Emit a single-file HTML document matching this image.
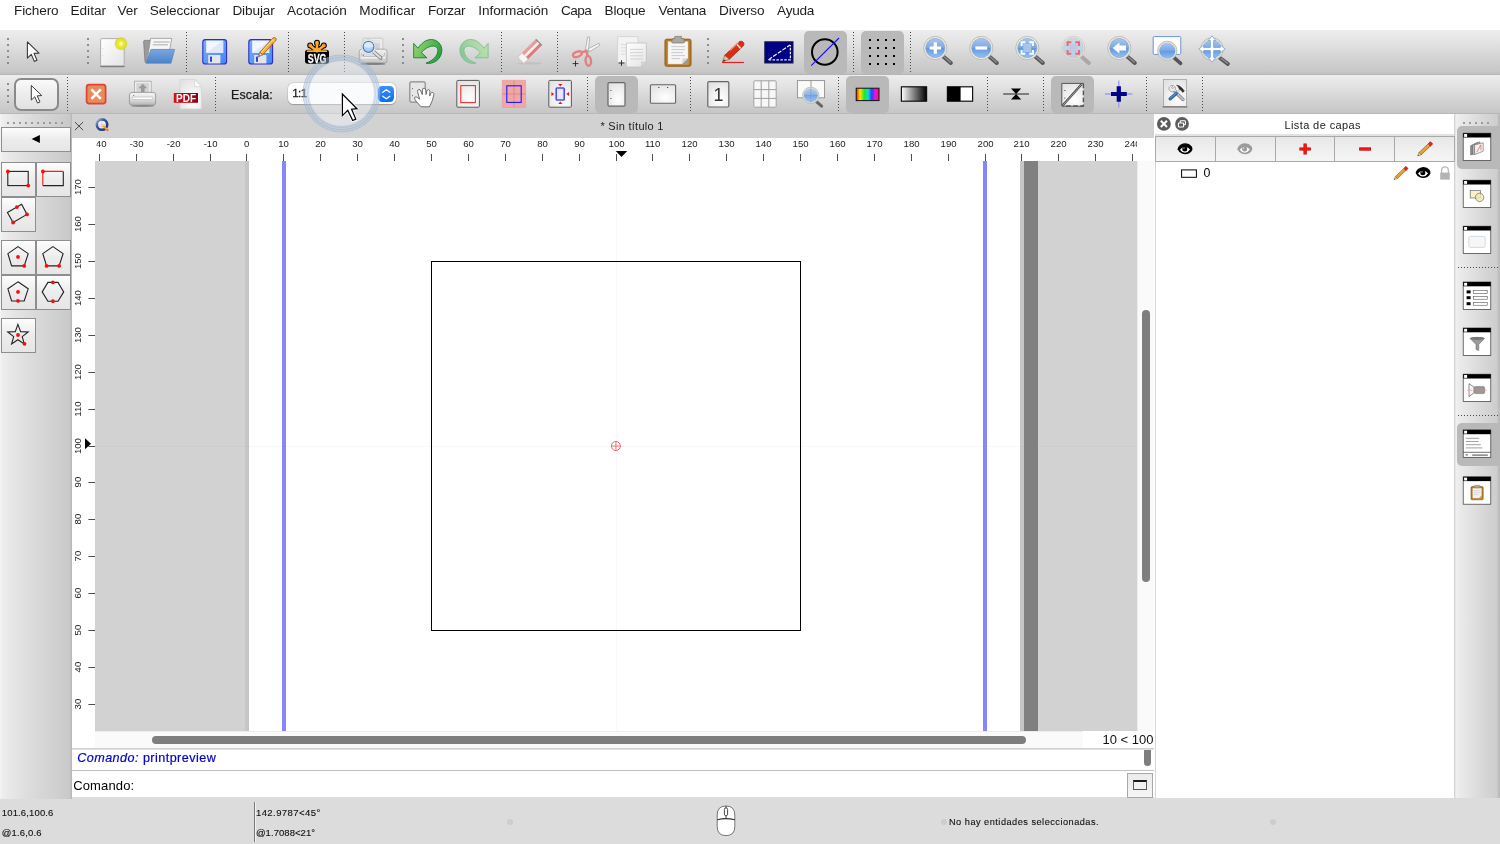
<!DOCTYPE html>
<html lang="es">
<head>
<meta charset="utf-8">
<title>LibreCAD - Sin título 1</title>
<style>
*{box-sizing:border-box}
html,body{margin:0;padding:0}
body{width:1500px;height:844px;position:relative;overflow:hidden;background:#fff;font-family:"Liberation Sans",sans-serif;color:#000;font-size:13px}
.abs{position:absolute}
#menubar{position:absolute;left:0;top:0;width:1500px;height:30px;background:#fff}
#menubar span{position:absolute;top:2px;font-size:14px;line-height:17px;color:#1c1c1c;white-space:nowrap;transform-origin:0 50%}
#tb1{position:absolute;left:0;top:30.4px;width:1500px;height:44px;background:linear-gradient(#ededed,#e2e2e2 30%,#d2d2d2 66%,#c8c8c8 93%,#c0c0c0)}
#tb2{position:absolute;left:0;top:75px;width:1500px;height:38.6px;background:linear-gradient(#ededed,#e2e2e2 30%,#d2d2d2 66%,#c8c8c8 93%,#c2c2c2)}
.vsep{position:absolute;width:1px;background:repeating-linear-gradient(#4a4a4a 0 1px,transparent 1px 3px)}
.grip{position:absolute;width:2px;background:repeating-linear-gradient(#8c8c8c 0 2px,transparent 2px 6px)}
.chk{position:absolute;background:#b9b9b9;border-radius:5px}
svg{position:absolute;overflow:visible;will-change:transform}
#leftdock{position:absolute;left:0;top:114px;width:72px;height:684.6px;z-index:2;background:linear-gradient(90deg,#f6f6f6 0,#eeeeee 2.5%,#e4e4e4 22%,#d9d9d9 50%,#cfcfcf 80%,#c9c9c9 97%,#bdbdbd 98.5%,#b6b6b6)}
.tbtn{position:absolute;width:35px;height:35px;border:1px solid #8e8e8e;background:linear-gradient(#fdfdfd,#ececec 50%,#e6e6e6)}
#mdibar{position:absolute;left:72px;top:114px;width:1081.7px;height:23.8px;background:#d2d2d2}
#status{position:absolute;left:0;top:797px;width:1500px;height:47px;background:#dcdcdc}
#status span{position:absolute;font-size:10px;white-space:nowrap;color:#111}
#rightbar{position:absolute;left:1454px;top:114px;width:46px;height:684.2px;z-index:1;background:linear-gradient(90deg,#d4d4d4 0,#d4d4d4 1px,#f1f1f1 1.8px,#ececec 10%,#e2e2e2 36%,#d7d7d7 64%,#cdcdcd 94%,#bdbdbd 96.5%,#bbbbbb)}
#layers{position:absolute;left:1153.7px;top:114px;width:300.3px;height:684.2px;background:#fff;z-index:1}
.lbtn{position:absolute;top:136px;height:26px;border:1.2px solid #a9a9a9;background:linear-gradient(#e7e7e7,#eeeeee 45%,#f5f5f5)}
</style>
</head>
<body>
<div id="menubar"><svg style="left:0;top:0" width="1500" height="30" viewBox="0 0 1500 30" font-family="Liberation Sans, sans-serif"><text x="14.0" y="15.4" font-size="13.6" fill="#1e1e1e" textLength="44.6" lengthAdjust="spacing" >Fichero</text>
<text x="70.5" y="15.4" font-size="13.6" fill="#1e1e1e" textLength="35.5" lengthAdjust="spacing" >Editar</text>
<text x="117.6" y="15.4" font-size="13.6" fill="#1e1e1e" textLength="20.3" lengthAdjust="spacing" >Ver</text>
<text x="149.8" y="15.4" font-size="13.6" fill="#1e1e1e" textLength="69.9" lengthAdjust="spacing" >Seleccionar</text>
<text x="232.4" y="15.4" font-size="13.6" fill="#1e1e1e" textLength="42.4" lengthAdjust="spacing" >Dibujar</text>
<text x="287.0" y="15.4" font-size="13.6" fill="#1e1e1e" textLength="59.8" lengthAdjust="spacing" >Acotación</text>
<text x="359.2" y="15.4" font-size="13.6" fill="#1e1e1e" textLength="56.2" lengthAdjust="spacing" >Modificar</text>
<text x="427.9" y="15.4" font-size="13.6" fill="#1e1e1e" textLength="37.7" lengthAdjust="spacing" >Forzar</text>
<text x="478.3" y="15.4" font-size="13.6" fill="#1e1e1e" textLength="70.1" lengthAdjust="spacing" >Información</text>
<text x="560.9" y="15.4" font-size="13.6" fill="#1e1e1e" textLength="31.0" lengthAdjust="spacing" >Capa</text>
<text x="604.6" y="15.4" font-size="13.6" fill="#1e1e1e" textLength="41.0" lengthAdjust="spacing" >Bloque</text>
<text x="658.4" y="15.4" font-size="13.6" fill="#1e1e1e" textLength="48.0" lengthAdjust="spacing" >Ventana</text>
<text x="719.1" y="15.4" font-size="13.6" fill="#1e1e1e" textLength="45.5" lengthAdjust="spacing" >Diverso</text>
<text x="777.1" y="15.4" font-size="13.6" fill="#1e1e1e" textLength="37.3" lengthAdjust="spacing" >Ayuda</text></svg></div>
<div id="tb1"></div>
<div class="abs" style="left:0;top:73.8px;width:1500px;height:1.3px;background:linear-gradient(#bdbdbd,#b0b0b0)"></div>
<div id="tb2"></div>
<div class="abs" style="left:0;top:112.6px;width:1500px;height:1.3px;background:linear-gradient(#bdbdbd,#b4b4b4)"></div>
<!-- checked backgrounds -->
<div class="chk" style="left:804px;top:31px;width:43px;height:43px"></div>
<div class="chk" style="left:861px;top:31px;width:43px;height:43px"></div>
<div class="chk" style="left:595px;top:76px;width:43px;height:37px"></div>
<div class="chk" style="left:846px;top:76px;width:43px;height:37px"></div>
<div class="chk" style="left:1051px;top:76px;width:43px;height:37px"></div>
<!-- grips & separators toolbar 1 -->
<div class="grip" style="left:7px;top:38px;height:26px"></div>
<div class="grip" style="left:87px;top:38px;height:26px"></div>
<div class="grip" style="left:402px;top:38px;height:26px"></div>
<div class="grip" style="left:707px;top:38px;height:26px"></div>
<div class="vsep" style="left:186px;top:32px;height:41px"></div>
<div class="vsep" style="left:288px;top:32px;height:41px"></div>
<div class="vsep" style="left:344px;top:32px;height:41px"></div>
<div class="vsep" style="left:501px;top:32px;height:41px"></div>
<div class="vsep" style="left:557px;top:32px;height:41px"></div>
<div class="vsep" style="left:853px;top:32px;height:41px"></div>
<div class="vsep" style="left:910px;top:32px;height:41px"></div>
<!-- grips & separators toolbar 2 -->
<div class="grip" style="left:7px;top:83px;height:20px"></div>
<div class="vsep" style="left:67px;top:77px;height:35px"></div>
<div class="vsep" style="left:215px;top:77px;height:35px"></div>
<div class="vsep" style="left:587px;top:77px;height:35px"></div>
<div class="vsep" style="left:690px;top:77px;height:35px"></div>
<div class="vsep" style="left:838px;top:77px;height:35px"></div>
<div class="vsep" style="left:987px;top:77px;height:35px"></div>
<div class="vsep" style="left:1043px;top:77px;height:35px"></div>
<div class="vsep" style="left:1146px;top:77px;height:35px"></div>
<div class="vsep" style="left:1202px;top:77px;height:35px"></div>
<!-- selected pointer button -->
<div class="abs" style="left:14px;top:78px;width:45px;height:33px;border:2px solid #8a8a8a;border-radius:7px;background:linear-gradient(#fafafa,#ededed 45%,#e2e2e2)"></div>
<!-- scale combo -->
<div class="abs" style="left:287.8px;top:83.2px;width:107.8px;height:21px;background:#fff;border-radius:5.5px;box-shadow:0 0 0 0.5px rgba(0,0,0,.10),0 .5px 1.2px rgba(0,0,0,.22)"></div>
<div class="abs" style="left:378.2px;top:85.8px;width:16.2px;height:16.6px;border-radius:4.2px;background:linear-gradient(#3d8efc,#0b6cf6)"></div>
<svg style="left:378px;top:85px" width="17" height="18" viewBox="378 85 17 18"><path d="M382.8 92.3 L386.3 89.7 L389.8 92.3 M382.8 96.2 L386.3 98.8 L389.8 96.2" fill="none" stroke="#fff" stroke-width="1.3" stroke-linecap="round" stroke-linejoin="round"/></svg>
<svg style="left:0;top:0" width="1500" height="120" viewBox="0 0 1500 120" font-family="Liberation Sans, sans-serif"><text x="231.0" y="99.3" font-size="12.4" fill="#1a1a1a" textLength="41.8" lengthAdjust="spacing" stroke="#1a1a1a" stroke-width=".25">Escala:</text>
<text x="292.2" y="96.9" font-size="11.6" fill="#1c1c1c" textLength="15.0" lengthAdjust="spacing" stroke="#1c1c1c" stroke-width=".3">1:1</text></svg>
<svg style="left:0;top:0" width="1500" height="120" viewBox="0 0 1500 120">
<defs>
<linearGradient id="gPage" x1="0" y1="0" x2="1" y2="1"><stop offset="0" stop-color="#fff"/><stop offset="1" stop-color="#e4e4e4"/></linearGradient>
<linearGradient id="gLens" x1="0" y1="0" x2="0" y2="1"><stop offset="0" stop-color="#aac8f0"/><stop offset=".5" stop-color="#78a6e4"/><stop offset=".52" stop-color="#6499e0"/><stop offset="1" stop-color="#94c0f4"/></linearGradient>
<linearGradient id="gLensD" x1="0" y1="0" x2="0" y2="1"><stop offset="0" stop-color="#c3d3ea"/><stop offset="1" stop-color="#b4cdea"/></linearGradient>
<radialGradient id="gGlow"><stop offset="0" stop-color="#fffde0"/><stop offset=".35" stop-color="#f1ee30"/><stop offset=".8" stop-color="#d8d820" stop-opacity=".85"/><stop offset="1" stop-color="#d0d020" stop-opacity="0"/></radialGradient>
<linearGradient id="gFold" x1="0" y1="0" x2="0" y2="1"><stop offset="0" stop-color="#7aa7de"/><stop offset="1" stop-color="#4a83c9"/></linearGradient>
<linearGradient id="gFlop" x1="0" y1="0" x2="1" y2="1"><stop offset="0" stop-color="#7ab0ff"/><stop offset="1" stop-color="#3f86f5"/></linearGradient>
<linearGradient id="gUndo" x1="0" y1="0.2" x2="1" y2=".6"><stop offset="0" stop-color="#9ad66e"/><stop offset=".5" stop-color="#5fbb5c"/><stop offset="1" stop-color="#2a9c3e"/></linearGradient>
<linearGradient id="gRedo" x1="0" y1="0.2" x2="1" y2=".6"><stop offset="0" stop-color="#bfe0ae"/><stop offset=".5" stop-color="#a8d8a8"/><stop offset="1" stop-color="#86c596"/></linearGradient>
<linearGradient id="gGrey" x1="0" y1="0" x2="0" y2="1"><stop offset="0" stop-color="#f4f4f4"/><stop offset="1" stop-color="#c4c4c4"/></linearGradient>
<g id="mag">
  <line x1="8" y1="8.5" x2="15.5" y2="15" stroke="#555" stroke-width="4" stroke-linecap="round"/>
  <line x1="9" y1="9" x2="15" y2="14.2" stroke="#8a8a8a" stroke-width="1.6" stroke-linecap="round"/>
  <circle r="11.6" fill="#ebebe3" stroke="#b9b9ae" stroke-width="0.9"/>
  <circle r="9.6" fill="url(#gLens)" stroke="#7d9cca" stroke-width=".6"/>
</g>
<g id="magD" opacity=".75">
  <line x1="8" y1="8.5" x2="15.5" y2="15" stroke="#9a9a9a" stroke-width="4" stroke-linecap="round"/>
  <circle r="11.6" fill="#e6e6e0" stroke="#c4c4bc" stroke-width="0.9"/>
  <circle r="9.8" fill="url(#gLensD)" stroke="#a8b8d0" stroke-width=".6"/>
</g>
<path id="cur" d="M0 0 L0 16.3 L3.9 12.6 L6.9 19.6 L9.6 18.4 L6.6 11.6 L11.6 11.3 Z" fill="#fff" stroke="#3a3a3a" stroke-width="1.1" stroke-linejoin="round"/>
</defs>
<!-- TB1 -->
<use href="#cur" x="27.4" y="41.8"/>
<!-- new -->
<rect x="100.6" y="38.6" width="23.6" height="27.2" rx="1.2" fill="url(#gPage)" stroke="#a8a8a8" stroke-width=".9"/>
<path d="M100.4 66 Q100.6 66.6 101.6 66.6 L123.2 66.6 Q124.2 66.6 124.4 66" fill="none" stroke="#808080" stroke-width="1.3"/>
<rect x="102.2" y="48" width="1" height=".8" fill="#d0d0d0"/><rect x="102.2" y="55.4" width="1" height=".8" fill="#d0d0d0"/>
<circle cx="121" cy="43.7" r="6.9" fill="url(#gGlow)"/>
<!-- open -->
<path d="M143.6 41.6 Q143.6 40.4 144.8 40.4 L150.6 40.4 L148 62.8 L146.2 62.8 Q145.2 62.8 145 61.6 Z" fill="#9a9a9a" stroke="#747474" stroke-width=".7"/>
<path d="M150.6 38.4 L171.8 38.4 L169.6 50 L152 50 L147.2 61.4 Z" fill="#f6f6f6" stroke="#8e8e8e" stroke-width=".7" stroke-linejoin="round"/>
<path d="M153.4 42 L169.6 42 M152.8 44.8 L168 44.8" stroke="#c4c4c4" stroke-width="1.5"/>
<path d="M150.9 49.4 L174.6 49.4 L171 63.2 L146.2 63.2 Z" fill="url(#gFold)" stroke="#4f84c8" stroke-width=".7" stroke-linejoin="round"/>
<!-- save -->
<g id="flop">
<rect x="202.8" y="39.6" width="23.8" height="24.4" rx="2.6" fill="url(#gFlop)" stroke="#2b2fc4" stroke-width="1.1"/>
<rect x="206.2" y="40.6" width="17" height="12.4" fill="#f4f7ff"/>
<path d="M206.2 53 L223.2 40.6 L223.2 53 Z" fill="#dfe8fb"/>
<rect x="208.2" y="55" width="12.2" height="8.4" fill="#e4e4ea"/>
<rect x="210" y="56.6" width="2" height="5.2" fill="#2a48d8"/>
</g>
<use href="#flop" x="46"/>
<path d="M272.7 38.2 Q274.6 36.8 275.9 38.4 Q277 39.6 275.5 40.8 L262.6 54.9 L259.8 52.3 Z" fill="#fbb416" stroke="#b4401a" stroke-width=".8" stroke-linejoin="round"/>
<path d="M273 39.6 L260.8 52.8" stroke="#ffe48a" stroke-width="1"/>
<path d="M259.8 52.3 L262.6 54.9 L258.4 56.7 Z" fill="#f4dcb4" stroke="#8a3a1a" stroke-width=".6" stroke-linejoin="round"/>
<path d="M259.2 55.2 L260 56 L258.4 56.7 Z" fill="#333"/>
<path d="M271.6 39.4 L274.4 42" stroke="#e0e0d8" stroke-width="1"/>
<!-- svg -->
<g stroke="#000" stroke-width="4.6" stroke-linecap="round" stroke-linejoin="round" fill="#000">
<path d="M317 42.9 L317 50 M310.4 45.6 L316 50.6 M323.6 45.6 L318 50.6"/>
<circle cx="317" cy="42.7" r=".7"/><circle cx="310.2" cy="45.4" r=".7"/><circle cx="323.8" cy="45.4" r=".7"/>
</g>
<rect x="305" y="49.8" width="24" height="14" rx="2.8" fill="#000"/>
<g stroke="#fba92c" stroke-width="2.7" stroke-linecap="round" fill="#fba92c">
<path d="M317 43 L317 50.4 M310.5 45.7 L316.4 51 M323.5 45.7 L317.6 51"/>
<circle cx="317" cy="42.7" r=".55"/><circle cx="310.2" cy="45.4" r=".55"/><circle cx="323.8" cy="45.4" r=".55"/>
<path d="M307.6 51.2 H326.4" stroke-width="1.8"/>
</g>
<text x="317.1" y="63" font-size="13.2" font-weight="bold" fill="#fff" stroke="#fff" stroke-width=".3" text-anchor="middle" textLength="18.8" lengthAdjust="spacingAndGlyphs" font-family="Liberation Sans, sans-serif">SVG</text>
<!-- print preview -->
<rect x="363.2" y="38.2" width="19.6" height="13.4" rx="1" fill="#ececec" stroke="#bcbcbc" stroke-width=".7"/>
<rect x="366" y="40.2" width="14" height="10" fill="#d2d2d2"/>
<rect x="366" y="40.2" width="14" height="3" fill="#e6e6e6"/>
<path d="M361.6 49.2 L384.6 49.2 Q387 49.4 387 52.4 L387 60.6 Q387 63 384.4 63 L361.8 63 Q359.2 63 359.2 60.6 L359.2 52.4 Q359.4 49.4 361.6 49.2 Z" fill="url(#gGrey)" stroke="#9c9c9c" stroke-width=".8"/>
<path d="M361.4 52.6 Q361.4 56.4 363.4 56.6 L382.8 56.6 Q384.8 56.4 384.8 52.6" fill="none" stroke="#b2b2b2" stroke-width=".7"/>
<path d="M361 57.8 H385.2" stroke="#fafafa" stroke-width="1.2"/>
<rect x="363" y="54.6" width="1" height="1" fill="#666"/>
<ellipse cx="373" cy="63.9" rx="12.6" ry="1.2" fill="#6e6e6e" opacity=".75"/>
<path d="M373.4 51.6 L380.6 57.9" stroke="#858585" stroke-width="3.8" stroke-linecap="round"/>
<path d="M373.6 51.7 L380.5 57.7" stroke="#e2e2e2" stroke-width="2" stroke-linecap="round"/>
<circle cx="368.5" cy="46.9" r="7.3" fill="#f3f3f1" stroke="#c4c4c0" stroke-width=".6"/>
<circle cx="368.5" cy="46.9" r="5.4" fill="#b4cdec" stroke="#4a80d0" stroke-width="1.3"/>
<path d="M363.8 46.6 A4.7 4.7 0 0 1 373.2 46.6 Q368.5 49 363.8 46.6 Z" fill="#dce9f8"/>
<!-- undo -->
<path d="M413.7 43.4 L413.7 57.8 L426.9 57.8 L421.5 52.7 C424 49.5 428 46.3 433.2 46.1 C437 46.3 438.2 49 437.7 51.5 C437.2 56 433.5 60.3 426 63.2 C434 64.6 441.5 59 441.9 50.5 C441.9 44 437 39.6 431.4 39.5 C425 39.6 421 44 417.9 48.2 Z" fill="url(#gUndo)" stroke="#1a7f2c" stroke-width=".9" stroke-linejoin="round"/>
<!-- redo -->
<g transform="translate(901.8 0) scale(-1 1)"><path d="M413.7 43.4 L413.7 57.8 L426.9 57.8 L421.5 52.7 C424 49.5 428 46.3 433.2 46.1 C437 46.3 438.2 49 437.7 51.5 C437.2 56 433.5 60.3 426 63.2 C434 64.6 441.5 59 441.9 50.5 C441.9 44 437 39.6 431.4 39.5 C425 39.6 421 44 417.9 48.2 Z" fill="url(#gRedo)" stroke="#7cbd8e" stroke-width=".9" stroke-linejoin="round"/></g>
<!-- eraser -->
<ellipse cx="530" cy="63.3" rx="12.4" ry="1.3" fill="#bdb4b4" opacity=".55"/>
<g transform="rotate(-45 530.05 51.15)">
<rect x="517.05" y="46.9" width="26" height="8.5" rx=".8" fill="#df7a7a"/>
<rect x="517.05" y="46.9" width="26" height="2.8" fill="#e89c9c"/>
<rect x="521" y="49.7" width="22" height="2.7" fill="#f3f0f0"/>
<rect x="541.8" y="46.9" width="1.25" height="8.5" fill="#8e8e8e"/>
<rect x="517.05" y="46.9" width="6" height="8.5" rx=".6" fill="#f6f6f6" stroke="#c4c4c4" stroke-width=".5"/>
</g>
<!-- scissors -->
<path d="M587.6 37 L589.8 37.2 L588.2 52.4 L585.2 51.6 Z" fill="#f4f4f4" stroke="#a0a0a0" stroke-width=".7" stroke-linejoin="round"/>
<path d="M599 43.2 L599.8 45.4 L589.4 51.8 L588.2 48.8 Z" fill="#f4f4f4" stroke="#a0a0a0" stroke-width=".7" stroke-linejoin="round"/>
<ellipse cx="577.4" cy="54.3" rx="4.5" ry="2.5" transform="rotate(-20 577.4 54.3)" fill="none" stroke="#e08282" stroke-width="2.4"/>
<ellipse cx="588.3" cy="60.9" rx="2.7" ry="4.9" transform="rotate(-6 588.3 60.9)" fill="none" stroke="#e08282" stroke-width="2.4"/>
<path d="M581.6 52.6 L586.6 50.6 L587.4 56.2" fill="none" stroke="#e08282" stroke-width="2.4" stroke-linejoin="round"/>
<path d="M572.6 63.6 L578.4 63.6 M575.5 60.7 L575.5 66.5" stroke="#222" stroke-width=".9"/>
<!-- copy -->
<rect x="617.6" y="36.6" width="20.4" height="26" rx="1" fill="#f3f3f3" stroke="#cfcfcf" stroke-width=".8"/>
<path d="M621 44.6 H635 M621 47.8 H635 M621 51 H635 M621 54.2 H630" stroke="#dcdcdc" stroke-width="1"/>
<path d="M626.4 43 L646.4 43 L646.4 62 L641.6 67 L626.4 67 Z" fill="url(#gPage)" stroke="#c2c2c2" stroke-width=".8"/>
<path d="M646.4 62 L641.6 62 L641.6 67 Z" fill="#d8d8d8" stroke="#bdbdbd" stroke-width=".5"/>
<path d="M630 49.4 H643 M630 52.6 H643 M630 55.8 H643 M630 59 H643" stroke="#d2d2d2" stroke-width="1"/>
<path d="M618.6 63 L624.4 63 M621.5 60.2 L621.5 65.8" stroke="#222" stroke-width=".9"/>
<!-- paste -->
<rect x="665" y="39.2" width="26" height="27" rx="1.6" fill="#b87a22" stroke="#8f5a12" stroke-width="1"/>
<rect x="668" y="41.6" width="20" height="22.4" fill="#f6f6f6" stroke="#d0d0d0" stroke-width=".5"/>
<path d="M671.4 46.6 H685 M671.4 49.6 H685 M671.4 52.6 H683 M671.4 55.6 H685 M671.4 58.6 H680" stroke="#c9c9c9" stroke-width="1"/>
<path d="M688 58 L688 64 L682 64 Z" fill="#9a9a9a"/>
<path d="M682 64 L688 58 L682.6 58.6 Z" fill="#d6d6d6"/>
<path d="M671.6 41.8 L672.6 38.6 L674.6 38.6 L674.8 36.4 L681.4 36.4 L681.6 38.6 L683.6 38.6 L684.6 41.8 Q684.6 43 683 43 L673 43 Q671.6 43 671.6 41.8 Z" fill="#a9a99f" stroke="#77776e" stroke-width=".7"/>
<!-- pencil -->
<path d="M739.6 41.4 Q742 40.6 743.6 42.6 Q744.6 44.4 743.2 46 L729.4 59.2 L724.6 55.4 Z" fill="#e02a12" stroke="#8a3a10" stroke-width=".8"/>
<path d="M736.6 44 L740.6 48.4" stroke="#ddd" stroke-width="1.6"/>
<path d="M738.6 42.4 L730 50.6" stroke="#ff8a70" stroke-width="1.2"/>
<path d="M724.6 55.4 L729.4 59.2 L722.6 61.8 Z" fill="#e8c39a" stroke="#8a5a2a" stroke-width=".6"/>
<path d="M724 59.4 L725.6 60.6 L722.6 61.8 Z" fill="#222"/>
<line x1="722" y1="62.4" x2="744" y2="62.4" stroke="#f00" stroke-width="1"/>
<!-- draft -->
<rect x="764.8" y="41.8" width="28.2" height="21.2" fill="#000084" stroke="#1a1a3c" stroke-width="1"/>
<path d="M768.6 59.6 L790 45" stroke="#fff" stroke-width="1.1" stroke-dasharray="4.2 1.4"/>
<path d="M768.6 59.8 L790.4 59.8 L790.4 45" fill="none" stroke="#e8e8ff" stroke-width="1.3" stroke-dasharray="2.6 1.3"/>
<!-- circle/line -->
<circle cx="824.8" cy="52" r="12.8" fill="none" stroke="#000" stroke-width="2"/>
<line x1="811.2" y1="65.6" x2="839" y2="38" stroke="#1010ff" stroke-width="1.1"/>
<!-- grid dots -->
<g fill="#000">
<rect x="869" y="39" width="2" height="2"/><rect x="877" y="39" width="2" height="2"/><rect x="885" y="39" width="2" height="2"/><rect x="893" y="39" width="2" height="2"/>
<rect x="869" y="47" width="2" height="2"/><rect x="877" y="47" width="2" height="2"/><rect x="885" y="47" width="2" height="2"/><rect x="893" y="47" width="2" height="2"/>
<rect x="869" y="55" width="2" height="2"/><rect x="877" y="55" width="2" height="2"/><rect x="885" y="55" width="2" height="2"/><rect x="893" y="55" width="2" height="2"/>
<rect x="869" y="63" width="2" height="2"/><rect x="877" y="63" width="2" height="2"/><rect x="885" y="63" width="2" height="2"/><rect x="893" y="63" width="2" height="2"/>
</g>
<!-- zooms -->
<use href="#mag" x="935.3" y="48"/>
<path d="M929.6 48 H941 M935.3 42.3 V53.7" stroke="#fff" stroke-width="3.2"/>
<use href="#mag" x="981.3" y="48"/>
<path d="M975.4 48 H987.2" stroke="#fff" stroke-width="3.2"/>
<use href="#mag" x="1027.3" y="48"/>
<rect x="1023.3" y="44" width="8" height="8" fill="#a9c4ea"/>
<path d="M1021.6 46 V42.3 H1025.3 M1029.3 42.3 H1033 V46 M1033 50 V53.7 H1029.3 M1025.3 53.7 H1021.6 V50" fill="none" stroke="#fff" stroke-width="1.9"/>
<use href="#magD" x="1073.3" y="48"/>
<rect x="1069.3" y="44" width="8" height="8" fill="#bccbe2"/>
<path d="M1067.6 46 V42.3 H1071.3 M1075.3 42.3 H1079 V46 M1079 50 V53.7 H1075.3 M1071.3 53.7 H1067.6 V50" fill="none" stroke="#ee6868" stroke-width="2"/>
<use href="#mag" x="1119.3" y="48"/>
<path d="M1112.6 48 L1119.4 42.6 L1119.4 45.6 L1126 45.6 L1126 50.4 L1119.4 50.4 L1119.4 53.4 Z" fill="#fff"/>
<!-- zoom window -->
<rect x="1153.2" y="36.6" width="27.6" height="17.8" rx="1" fill="#fdfdff" stroke="#6c93d4" stroke-width="1"/>
<line x1="1174" y1="57.6" x2="1180.6" y2="63.4" stroke="#555" stroke-width="3.6" stroke-linecap="round"/>
<circle cx="1167.3" cy="50.8" r="9.6" fill="#e4e4da" stroke="#b9b9ae" stroke-width=".9"/>
<circle cx="1167.3" cy="50.8" r="8" fill="url(#gLens)"/>
<!-- zoom pan -->
<line x1="1220" y1="58" x2="1227.8" y2="63.8" stroke="#555" stroke-width="4" stroke-linecap="round"/>
<line x1="1221" y1="58.4" x2="1227.4" y2="63.2" stroke="#8a8a8a" stroke-width="1.5" stroke-linecap="round"/>
<circle cx="1212" cy="49" r="11.3" fill="#e2e2d8" stroke="#b4b4a8" stroke-width=".9"/>
<circle cx="1212" cy="49" r="9.6" fill="url(#gLens)"/>
<path d="M1212 35.8 L1215.7 40.6 L1213.6 40.6 L1213.6 47.4 L1220.4 47.4 L1220.4 45.3 L1225.2 49 L1220.4 52.7 L1220.4 50.6 L1213.6 50.6 L1213.6 57.4 L1215.7 57.4 L1212 62.2 L1208.3 57.4 L1210.4 57.4 L1210.4 50.6 L1203.6 50.6 L1203.6 52.7 L1198.8 49 L1203.6 45.3 L1203.6 47.4 L1210.4 47.4 L1210.4 40.6 L1208.3 40.6 Z" fill="#fff" stroke="#5c8cd8" stroke-width=".6" stroke-linejoin="round"/>
</svg>
<svg style="left:0;top:0" width="1500" height="120" viewBox="0 0 1500 120">
<defs>
<linearGradient id="gRain" x1="0" y1="0" x2="1" y2="0"><stop offset="0" stop-color="#ff1000"/><stop offset=".17" stop-color="#ffe800"/><stop offset=".36" stop-color="#20e820"/><stop offset=".52" stop-color="#10d8e8"/><stop offset=".68" stop-color="#2840ff"/><stop offset=".84" stop-color="#f010e0"/><stop offset="1" stop-color="#ff1060"/></linearGradient>
<linearGradient id="gBW" x1="0" y1="0" x2="1" y2="0"><stop offset="0" stop-color="#fff"/><stop offset="1" stop-color="#000"/></linearGradient>
<linearGradient id="gPdf" x1="0" y1="0" x2="1" y2="0"><stop offset="0" stop-color="#d8101c"/><stop offset="1" stop-color="#8a0010"/></linearGradient>
<linearGradient id="gPrn" x1="0" y1="0" x2="0" y2="1"><stop offset="0" stop-color="#f6f6f6"/><stop offset=".55" stop-color="#dedede"/><stop offset="1" stop-color="#b4b4b4"/></linearGradient>
<radialGradient id="gPg" cx=".6" cy=".7" r=".8"><stop offset="0" stop-color="#fff"/><stop offset="1" stop-color="#e2e2e2"/></radialGradient>
</defs>
<use href="#cur" x="31.3" y="85.4" transform="translate(31.3 85.4) scale(.9) translate(-31.3 -85.4)"/>
<!-- close X -->
<rect x="86.6" y="84.6" width="19" height="19" rx="2.6" fill="#e88a5e" stroke="#de4434" stroke-width="1.7"/>
<path d="M91.4 89.4 L100.8 98.8 M100.8 89.4 L91.4 98.8" stroke="#fff" stroke-width="2.6"/>
<!-- printer -->
<rect x="134.4" y="81.2" width="16.8" height="12.4" fill="#eeeeee" stroke="#a8a8a8" stroke-width=".8"/>
<rect x="136.4" y="83" width="12.8" height="9.4" fill="#d4d4d4"/>
<path d="M142.8 83.8 L147.2 88.2 L144.6 88.2 L144.6 92 L141 92 L141 88.2 L138.4 88.2 Z" fill="#9a9a9a"/>
<path d="M131.8 92.4 L153.8 92.4 Q155.6 92.8 155.6 95 L155.6 102.8 Q155.6 105.2 153 105.2 L132.4 105.2 Q129.4 105.2 129.4 102.8 L129.4 95 Q129.6 92.8 131.8 92.4 Z" fill="url(#gPrn)" stroke="#8e8e8e" stroke-width=".8"/>
<rect x="132.4" y="97" width="20.4" height="2.6" rx="1.1" fill="#fdfdfd" stroke="#a4a4a4" stroke-width=".5"/>
<rect x="133.2" y="95" width="1" height="1" fill="#777"/>
<ellipse cx="142.6" cy="106" rx="11.6" ry="1.1" fill="#7e7e7e" opacity=".75"/>
<!-- pdf -->
<path d="M180 79.4 L194.6 79.4 L201.4 86.6 L201.4 109 L180 109 Z" fill="url(#gPg)" stroke="#d2d2d2" stroke-width=".7"/>
<path d="M194.6 79.4 L194.6 86.6 L201.4 86.6 Z" fill="#fafafa" stroke="#d0d0d0" stroke-width=".6"/>
<rect x="173.8" y="93" width="24.2" height="9.8" fill="url(#gPdf)"/>
<text x="186" y="101.7" font-size="10.4" font-weight="bold" fill="#fff" text-anchor="middle" textLength="20" lengthAdjust="spacingAndGlyphs" font-family="Liberation Sans, sans-serif">PDF</text>
<!-- hand -->
<rect x="409.8" y="81.8" width="15.4" height="20.4" rx="1.4" fill="#e6e6e6" stroke="#8a8a8a" stroke-width="1.2"/>
<rect x="412" y="88.2" width="1" height="1" fill="#666"/><rect x="412" y="95.2" width="1" height="1" fill="#666"/>
<path d="M421 106.8 L416.4 101.6 Q413.8 98.6 414.7 97.3 Q415.8 96.2 417.6 97.6 L419.6 99.2 L417.6 91.6 Q417.4 89.6 418.8 89.4 Q420.2 89.4 420.8 91 L422.3 94.6 L422.4 90 Q422.6 88.2 424 88.2 Q425.6 88.2 425.8 90 L426 94.6 L426.8 91 Q427.4 89.4 428.6 89.6 Q430 90 429.9 91.8 L429.7 96 L430.8 93.4 Q431.6 92 432.8 92.4 Q434 93 433.8 94.8 Q433 100.6 429.4 106.8 Z" fill="#fff" stroke="#585858" stroke-width=".85" stroke-linejoin="round"/>
<!-- red rect page -->
<rect x="456.8" y="80.4" width="22.6" height="26.8" rx="1" fill="url(#gPg)" stroke="#5a5a5a" stroke-width="1"/>
<rect x="460.8" y="85.6" width="14.6" height="17" fill="none" stroke="#ff1a1a" stroke-width="1"/>
<!-- pink grid -->
<rect x="502.2" y="80.2" width="23.6" height="27.4" fill="#f3a6a6"/>
<path d="M514 80.2 V107.6 M502.2 94 H525.8" stroke="#d88a8a" stroke-width="1"/>
<rect x="502.2" y="80.2" width="23.6" height="27.4" fill="none" stroke="#e4a0a0" stroke-width=".6"/>
<rect x="506.8" y="85.8" width="14.4" height="16.6" fill="none" stroke="#1818ff" stroke-width="1.1"/>
<!-- fit page -->
<rect x="548.8" y="80.4" width="22.6" height="26.8" rx="1" fill="url(#gPg)" stroke="#5a5a5a" stroke-width="1"/>
<rect x="556.2" y="88" width="8" height="12" rx=".8" fill="#e8e8ff" stroke="#4c4cff" stroke-width="1.6"/>
<path d="M558.2 84 L562.4 84 L560.3 86.6 Z M558.2 104 L562.4 104 L560.3 101.4 Z M551.4 91.9 L551.4 96.1 L554.2 94 Z M569 91.9 L569 96.1 L566.2 94 Z" fill="#ff1010"/>
<!-- portrait -->
<rect x="608" y="82.6" width="17" height="23.6" rx="1.2" fill="url(#gPg)" stroke="#666" stroke-width="1.2"/>
<rect x="610.4" y="90" width="1" height="1" fill="#444"/><rect x="610.4" y="98" width="1" height="1" fill="#444"/>
<!-- landscape -->
<rect x="650.4" y="84.8" width="25.2" height="18.4" rx="1" fill="url(#gPg)" stroke="#666" stroke-width="1.1"/>
<rect x="658.2" y="87" width="1.2" height="1" fill="#444"/><rect x="667" y="87" width="1.2" height="1" fill="#444"/>
<!-- 1 page -->
<rect x="707.8" y="81.6" width="21" height="25.4" rx="1.2" fill="url(#gPg)" stroke="#666" stroke-width="1.2"/>
<text x="718.4" y="101" font-size="18" fill="#333" text-anchor="middle" font-family="Liberation Sans, sans-serif">1</text>
<!-- grid pages -->
<rect x="753.8" y="80.8" width="22.4" height="26.4" rx="1" fill="#f7f7f7" stroke="#a2a2a2" stroke-width="1"/>
<path d="M761.2 80.8 V107.2 M768.8 80.8 V107.2 M753.8 89.6 H776.2 M753.8 98.4 H776.2" stroke="#9e9e9e" stroke-width="1"/>
<!-- zoom page -->
<rect x="797.4" y="80.6" width="27.2" height="17.2" fill="#fafafa" stroke="#8e8e8e" stroke-width=".9"/>
<line x1="811" y1="80.6" x2="811" y2="97.8" stroke="#8e8e8e" stroke-width=".9"/>
<line x1="816.4" y1="101.6" x2="821.6" y2="106.2" stroke="#666" stroke-width="3" stroke-linecap="round"/>
<circle cx="810.8" cy="95.4" r="8.2" fill="#dcdcd4" stroke="#b9b9ae" stroke-width=".8"/>
<circle cx="810.8" cy="95.4" r="6.8" fill="url(#gLens)" opacity=".8"/>
<path d="M810.8 88.6 V102.2 M804 95.4 H817.6" stroke="#6f96d2" stroke-width=".6"/>
<!-- rainbow -->
<rect x="856.2" y="88.2" width="22.8" height="12.4" fill="url(#gRain)" stroke="#111" stroke-width="1"/>
<!-- gradient -->
<rect x="901.4" y="86.8" width="25.2" height="14.4" fill="url(#gBW)" stroke="#111" stroke-width="1.2"/>
<!-- bw -->
<rect x="947.4" y="86.8" width="25.2" height="14.4" fill="#fff" stroke="#111" stroke-width="1.2"/>
<rect x="947.4" y="86.8" width="13.2" height="14.4" fill="#000"/>
<!-- line width -->
<line x1="1003.2" y1="94" x2="1029" y2="94" stroke="#333" stroke-width="1.1"/>
<path d="M1011 88.4 L1021.2 88.4 L1016.1 94 Z M1011 99.6 L1021.2 99.6 L1016.1 94 Z" fill="#000"/>
<!-- page diagonal -->
<rect x="1061.8" y="83.4" width="21.8" height="22.8" fill="url(#gPg)"/>
<path d="M1083.6 106.2 L1061.8 106.2 L1061.8 83.4 L1083.6 83.4" fill="none" stroke="#555" stroke-width="1"/>
<path d="M1083.4 83.6 V106 H1066" fill="none" stroke="#555" stroke-width="1.4" stroke-dasharray="4.6 2.4"/>
<path d="M1062.6 105.6 L1081.8 84" stroke="#444" stroke-width="2.2"/>
<path d="M1062.8 105.4 L1081.8 84" stroke="#ddd" stroke-width=".6"/>
<rect x="1064.4" y="90" width="1" height="1" fill="#444"/><rect x="1064.4" y="97.6" width="1" height="1" fill="#444"/>
<!-- blue plus -->
<path d="M1105 94 H1132.4 M1118.8 80.4 V107.6" stroke="#9a9aff" stroke-width="1.3"/>
<path d="M1111 94 H1126.8 M1118.8 86.2 V101.8" stroke="#00008a" stroke-width="4.2"/>
<!-- tools -->
<rect x="1163.6" y="79.5" width="22.8" height="27" fill="url(#gPg)" stroke="#a2a2a2" stroke-width=".8"/>
<path d="M1162.6 106.9 H1187.4" stroke="#7a7a7a" stroke-width="1.4"/>
<path d="M1175 91.8 L1183 99.4" stroke="#8a8a8a" stroke-width="3.4" stroke-linecap="round"/>
<path d="M1175 91.8 L1183 99.4" stroke="#c2c2c2" stroke-width="1.8" stroke-linecap="round"/>
<path d="M1173.6 85.6 Q1170.2 84.6 1169 87.4 Q1168.2 90.4 1171 91.6 Q1173 92.2 1174.6 91 L1176 92.2 L1177 91 L1175.4 89.6 Q1176 88 1175 86.6 L1172.8 88.6 L1171.4 87.6 Z" fill="#ececec" stroke="#8e8e8e" stroke-width=".7" stroke-linejoin="round"/>
<path d="M1176.4 93.2 L1180 89.6" stroke="#d8d8d8" stroke-width="2.4"/>
<path d="M1170.2 98.8 L1176.2 93.4" stroke="#3668a8" stroke-width="3.4" stroke-linecap="round"/>
<path d="M1170.4 98 L1175.8 93.2" stroke="#5a8cc8" stroke-width="1.2" stroke-linecap="round"/>
<path d="M1176.6 85 Q1180.6 85.4 1184.4 91 L1182.6 92.4 Q1181.6 90 1179.4 89.2 Q1178.8 87 1176.6 85 Z" fill="#2e2e2e" stroke="#2e2e2e" stroke-width=".5" stroke-linejoin="round"/>
</svg>
<div id="leftdock"></div>

<div class="abs" style="z-index:3;left:7px;top:122px;width:56px;height:2px;background:repeating-linear-gradient(90deg,#9a9a9a 0 2px,transparent 2px 6px)"></div>
<div class="tbtn" style="z-index:3;left:1px;top:126.5px;width:70px;height:25.2px"></div>
<div class="tbtn" style="z-index:3;left:1px;top:162px"></div><div class="tbtn" style="z-index:3;left:36px;top:162px"></div>
<div class="tbtn" style="z-index:3;left:1px;top:197px"></div>
<div class="tbtn" style="z-index:3;left:1px;top:240px"></div><div class="tbtn" style="z-index:3;left:36px;top:240px"></div>
<div class="tbtn" style="z-index:3;left:1px;top:275px"></div><div class="tbtn" style="z-index:3;left:36px;top:275px"></div>
<div class="tbtn" style="z-index:3;left:1px;top:318px"></div>
<svg style="left:0;top:0;z-index:4" width="80" height="400" viewBox="0 0 80 400">
<path d="M31.6 138.9 L39.9 134.9 L39.9 142.9 Z" fill="#000"/>
<g fill="none" stroke="#222" stroke-width="1.1">
<rect x="7.8" y="171.4" width="20.4" height="14.2"/>
<path d="M42.8 185.6 H63.3 V171.4"/>
<path d="M7.4 212.5 L21.6 204.3 L27 214.4 L13.1 222.5 Z"/>
<path d="M18 246.6 L28.2 253.6 L24.2 265.9 L11.6 265.9 L7.9 253.6 Z"/>
<path d="M52.9 246.6 L63.1 253.6 L59.1 265.9 L46.6 265.9 L42.8 253.6 Z"/>
<path d="M18 281.8 L28.2 288.8 L24.2 301 L11.6 301 L7.9 288.8 Z"/>
<path d="M42.2 291.9 L47.9 282.4 L58 282.4 L63.7 291.9 L58 301.2 L47.9 301.2 Z"/>
<path d="M17.9 324.4 L20.6 331.6 L28.2 331.9 L22.2 336.6 L24.3 343.9 L17.9 339.7 L11.6 343.9 L13.7 336.6 L7.7 331.9 L15.3 331.6 Z"/>
</g>
<path d="M42.8 185.6 V171.4 H63.3" fill="none" stroke="#ff1a1a" stroke-width="1.1"/>
<g fill="#ff0a0a">
<circle cx="7.9" cy="171.5" r="1.9"/><circle cx="28.2" cy="185.6" r="1.9"/>
<circle cx="42.9" cy="171.5" r="1.9"/>
<circle cx="16.9" cy="207.1" r="1.9"/><circle cx="27" cy="214.4" r="1.9"/><circle cx="13.1" cy="222.5" r="1.9"/>
<circle cx="18" cy="256.9" r="1.9"/><circle cx="24.2" cy="265.9" r="1.9"/>
<circle cx="46.6" cy="265.9" r="1.9"/><circle cx="59.1" cy="265.9" r="1.9"/>
<circle cx="18" cy="291.9" r="1.9"/><circle cx="18" cy="300.8" r="1.9"/>
<circle cx="52.9" cy="282.4" r="1.9"/><circle cx="52.9" cy="301.2" r="1.9"/>
<circle cx="18" cy="335" r="1.9"/><circle cx="24.5" cy="343.8" r="1.9"/>
</g>
</svg>
<div id="mdibar"></div>
<svg style="left:0;top:0" width="200" height="140" viewBox="0 0 200 140">
<path d="M74.9 122 L83.1 130.2 M83.1 122 L74.9 130.2" stroke="#3a3a3a" stroke-width=".9"/>
<defs><linearGradient id="gRing" x1="0" y1="0" x2="1" y2="1"><stop offset="0" stop-color="#a9b6dc"/><stop offset=".35" stop-color="#3c55a0"/><stop offset="1" stop-color="#182f78"/></linearGradient></defs>
<circle cx="102" cy="124.6" r="5.2" fill="#f4f4f4" stroke="url(#gRing)" stroke-width="2.6"/>
<path d="M102 121 V128.2 M98.4 124.6 H105.6" stroke="#c9c0c0" stroke-width=".6"/>
<path d="M99 126.6 Q101.4 125.8 103.6 127" stroke="#e09090" stroke-width=".5" fill="none"/>
<path d="M102.6 125.2 L107 129.6" stroke="#f4a81c" stroke-width="2.1"/>
<path d="M102.4 125 L103.2 125.8" stroke="#f6e7b0" stroke-width="2"/>
<path d="M106.8 129.4 L108.2 130.8" stroke="#e86a6a" stroke-width="2.1"/>
</svg>
<svg style="left:0;top:0" width="1500" height="140" viewBox="0 0 1500 140" font-family="Liberation Sans, sans-serif"><text x="600.4" y="130.0" font-size="11" fill="#1a1a1a" textLength="63.0" lengthAdjust="spacing" >* Sin título 1</text></svg>
<!-- drawing area -->
<div class="abs" style="left:72px;top:138px;width:1083px;height:611px;background:#fff"></div>
<div class="abs" style="left:95px;top:161px;width:1042px;height:570px;background:#d2d2d2;overflow:hidden">
  <div class="abs" style="left:150px;top:0;width:4px;height:570px;background:#c6c6c6"></div>
  <div class="abs" style="left:154px;top:0;width:771px;height:570px;background:#fff"></div>
  <div class="abs" style="left:925px;top:0;width:4px;height:570px;background:#c6c6c6"></div>
  <div class="abs" style="left:929px;top:0;width:13.5px;height:570px;background:#808080"></div>
  <div class="abs" style="left:187px;top:0;width:4px;height:570px;background:#8686ff"></div>
  <div class="abs" style="left:888px;top:0;width:4px;height:570px;background:#8686ff"></div>
  <div class="abs" style="left:521px;top:0;width:1px;height:570px;background:rgba(120,120,120,.05)"></div>
  <div class="abs" style="left:0;top:285px;width:1042px;height:1px;background:rgba(120,120,120,.05)"></div>
  <div class="abs" style="left:336px;top:100px;width:370px;height:370px;border:1px solid #000"></div>
  <svg style="left:511px;top:275px" width="20" height="20" viewBox="0 0 20 20"><circle cx="9.9" cy="10" r="4.5" fill="none" stroke="#f04040" stroke-width=".8"/><path d="M5.4 10 H14.4 M9.9 5.5 V14.5" stroke="#f04040" stroke-width=".7"/></svg>
</div>
<!-- rulers -->
<svg style="left:0;top:0" width="1160" height="760" viewBox="0 0 1160 760" font-family="Liberation Sans, sans-serif" font-size="9.6" fill="#222">
<defs><clipPath id="rc"><rect x="96.6" y="138" width="1040.4" height="24"/></clipPath><clipPath id="rv"><rect x="72" y="161" width="24" height="570"/></clipPath></defs><g clip-path="url(#rc)"><text x="99.6" y="147.1" text-anchor="middle">-40</text>
<text x="136.6" y="147.1" text-anchor="middle">-30</text>
<text x="173.6" y="147.1" text-anchor="middle">-20</text>
<text x="210.6" y="147.1" text-anchor="middle">-10</text>
<text x="246.6" y="147.1" text-anchor="middle">0</text>
<text x="283.6" y="147.1" text-anchor="middle">10</text>
<text x="320.6" y="147.1" text-anchor="middle">20</text>
<text x="357.6" y="147.1" text-anchor="middle">30</text>
<text x="394.6" y="147.1" text-anchor="middle">40</text>
<text x="431.6" y="147.1" text-anchor="middle">50</text>
<text x="468.6" y="147.1" text-anchor="middle">60</text>
<text x="505.6" y="147.1" text-anchor="middle">70</text>
<text x="542.6" y="147.1" text-anchor="middle">80</text>
<text x="579.6" y="147.1" text-anchor="middle">90</text>
<text x="616.6" y="147.1" text-anchor="middle">100</text>
<text x="652.6" y="147.1" text-anchor="middle">110</text>
<text x="689.6" y="147.1" text-anchor="middle">120</text>
<text x="726.6" y="147.1" text-anchor="middle">130</text>
<text x="763.6" y="147.1" text-anchor="middle">140</text>
<text x="800.6" y="147.1" text-anchor="middle">150</text>
<text x="837.6" y="147.1" text-anchor="middle">160</text>
<text x="874.6" y="147.1" text-anchor="middle">170</text>
<text x="911.6" y="147.1" text-anchor="middle">180</text>
<text x="948.6" y="147.1" text-anchor="middle">190</text>
<text x="985.6" y="147.1" text-anchor="middle">200</text>
<text x="1021.6" y="147.1" text-anchor="middle">210</text>
<text x="1058.6" y="147.1" text-anchor="middle">220</text>
<text x="1095.6" y="147.1" text-anchor="middle">230</text>
<text x="1132.6" y="147.1" text-anchor="middle">240</text></g><g clip-path="url(#rv)"><text transform="translate(81.4 704.1) rotate(-90)" text-anchor="middle">30</text>
<text transform="translate(81.4 667.1) rotate(-90)" text-anchor="middle">40</text>
<text transform="translate(81.4 630.1) rotate(-90)" text-anchor="middle">50</text>
<text transform="translate(81.4 593.1) rotate(-90)" text-anchor="middle">60</text>
<text transform="translate(81.4 556.1) rotate(-90)" text-anchor="middle">70</text>
<text transform="translate(81.4 519.1) rotate(-90)" text-anchor="middle">80</text>
<text transform="translate(81.4 482.1) rotate(-90)" text-anchor="middle">90</text>
<text transform="translate(81.4 446.1) rotate(-90)" text-anchor="middle">100</text>
<text transform="translate(81.4 409.1) rotate(-90)" text-anchor="middle">110</text>
<text transform="translate(81.4 372.1) rotate(-90)" text-anchor="middle">120</text>
<text transform="translate(81.4 335.1) rotate(-90)" text-anchor="middle">130</text>
<text transform="translate(81.4 298.1) rotate(-90)" text-anchor="middle">140</text>
<text transform="translate(81.4 261.1) rotate(-90)" text-anchor="middle">150</text>
<text transform="translate(81.4 224.1) rotate(-90)" text-anchor="middle">160</text>
<text transform="translate(81.4 187.1) rotate(-90)" text-anchor="middle">170</text></g><path d="M99.5 154 V161 M136.5 154 V161 M173.5 154 V161 M210.5 154 V161 M246.5 154 V161 M283.5 154 V161 M320.5 154 V161 M357.5 154 V161 M394.5 154 V161 M431.5 154 V161 M468.5 154 V161 M505.5 154 V161 M542.5 154 V161 M579.5 154 V161 M616.5 154 V161 M652.5 154 V161 M689.5 154 V161 M726.5 154 V161 M763.5 154 V161 M800.5 154 V161 M837.5 154 V161 M874.5 154 V161 M911.5 154 V161 M948.5 154 V161 M985.5 154 V161 M1021.5 154 V161 M1058.5 154 V161 M1095.5 154 V161 M1132.5 154 V161 M88.4 704.5 H95 M88.4 667.5 H95 M88.4 630.5 H95 M88.4 593.5 H95 M88.4 556.5 H95 M88.4 519.5 H95 M88.4 482.5 H95 M88.4 446.5 H95 M88.4 409.5 H95 M88.4 372.5 H95 M88.4 335.5 H95 M88.4 298.5 H95 M88.4 261.5 H95 M88.4 224.5 H95 M88.4 187.5 H95" stroke="#4c4c4c" stroke-width="1" fill="none"/>
<path d="M615.8 151 L627.2 151 L621.5 157 Z" fill="#000"/>
<path d="M85 438.2 L85 449.2 L91 443.7 Z" fill="#000"/>
</svg>
<!-- scrollbars -->
<div class="abs" style="left:1137px;top:161px;width:17px;height:570px;background:#fafafa;border-left:1px solid #ececec"></div>
<div class="abs" style="left:1142px;top:310px;width:8px;height:272px;border-radius:4px;background:#7e7e7e"></div>
<div class="abs" style="left:95px;top:731px;width:988px;height:17px;background:#fafafa;border-top:1px solid #ececec"></div>
<div class="abs" style="left:152px;top:736px;width:874px;height:8px;border-radius:4px;background:#7e7e7e"></div>
<div class="abs" style="left:1155px;top:162px;width:1px;height:636.2px;background:#d6d6d6;z-index:2"></div>
<!-- command area -->
<div class="abs" style="left:72px;top:748px;width:1082px;height:2px;background:linear-gradient(#c8c8c8,#eaeaea)"></div>
<div class="abs" style="left:72px;top:750px;width:1083px;height:48px;background:#fff"></div>
<div class="abs" style="left:72px;top:770px;width:1082px;height:1px;background:#c2c2c2"></div>
<div class="abs" style="left:1144px;top:750px;width:7px;height:15.5px;border-radius:0 0 3.5px 3.5px;background:#7e7e7e"></div>
<div class="abs" style="left:1127.2px;top:772.6px;width:25.8px;height:25.2px;border:1px solid #a8a8a8;background:linear-gradient(#ebebeb,#f5f5f5);z-index:1"></div>
<div class="abs" style="left:1133.4px;top:780.2px;width:13.6px;height:9.6px;border:1px solid #585858;border-top:2.8px solid #1c1c1c;background:#f2f2f2;z-index:2"></div>
<svg style="left:0;top:0" width="1500" height="844" viewBox="0 0 1500 844" font-family="Liberation Sans, sans-serif"><text x="77.2" y="762.2" font-size="12.6" fill="#0000d0" stroke="#0000d0" stroke-width=".2" textLength="138.6" lengthAdjust="spacing"><tspan font-style="italic">Comando:</tspan> printpreview</text>
<text x="73.2" y="790.0" font-size="13" fill="#000" textLength="61.0" lengthAdjust="spacing" >Comando:</text>
<text x="1102.4" y="744.1" font-size="13" fill="#111" textLength="51.2" lengthAdjust="spacing" >10 &lt; 100</text></svg>
<div id="layers"></div>
<div class="abs" style="left:1155px;top:134.4px;width:299px;height:28px;background:#e2e2e2;z-index:1"></div>
<div class="lbtn" style="z-index:2;left:1155.20px;width:60.6px"></div>
<div class="lbtn" style="z-index:2;left:1214.92px;width:60.6px"></div>
<div class="lbtn" style="z-index:2;left:1274.64px;width:60.6px"></div>
<div class="lbtn" style="z-index:2;left:1334.36px;width:60.6px"></div>
<div class="lbtn" style="z-index:2;left:1394.08px;width:60.6px"></div>
<svg style="left:0;top:0;z-index:3" width="1500" height="200" viewBox="0 0 1500 200">
<defs>
<g id="eye">
<path d="M-7.4 .4 Q-6.8 -3.4 -2 -5.2 Q3.6 -6.4 6.6 -2.6 Q7.6 -1 7.4 .6 Q7 2.6 4.4 4.4 Q1 6 -2.6 5 Q-6.2 3.6 -7.4 .4 Z"/>
<path d="M-5 1 Q-3.4 -1.6 .2 -1.8 Q3.6 -1.6 5 .8 Q3 3.8 0 3.9 Q-3.2 3.8 -5 1 Z" fill="#fff"/>
<circle cx="-.2" cy=".2" r="2.5"/>
<circle cx="-1" cy="-.7" r=".8" fill="#fff" opacity=".55"/>
</g>
<g id="pcl">
<path d="M12.6 -.6 L14.8 1.6 L3.4 12.4 L1.2 10.2 Z" fill="#dc9c30" stroke="#7a5212" stroke-width=".6" stroke-linejoin="round"/>
<path d="M12.6 -.6 L14.8 1.6 L12.4 3.9 L10.2 1.7 Z" fill="#ee1c2c" stroke="#a01018" stroke-width=".4"/>
<path d="M1.2 10.2 L3.4 12.4 L-.2 13.6 Z" fill="#ecd9a0" stroke="#7a5212" stroke-width=".5" stroke-linejoin="round"/>
<path d="M.5 12.4 L1.1 13 L-.2 13.6 Z" fill="#3a2a10"/>
<path d="M11.2 2.2 L2.6 10.4" stroke="#f0c060" stroke-width=".7"/>
</g>
</defs>
<circle cx="1163.9" cy="123.9" r="6.9" fill="#5c5c5c"/>
<path d="M1160.8 120.8 L1167 127 M1167 120.8 L1160.8 127" stroke="#fff" stroke-width="2"/>
<circle cx="1182" cy="123.9" r="6.9" fill="#5c5c5c"/>
<rect x="1180.2" y="120.8" width="5.2" height="4" rx=".8" fill="none" stroke="#fff" stroke-width="1.1"/>
<rect x="1178.4" y="123" width="5.2" height="4" rx=".8" fill="#5c5c5c" stroke="#fff" stroke-width="1.1"/>
<use href="#eye" x="1185" y="148.8" fill="#000"/>
<use href="#eye" x="1244.8" y="148.8" fill="#9c9c9c"/>
<path d="M1299.4 149 H1310.8 M1305.1 143.4 V154.6" stroke="#a80000" stroke-width="3.2"/>
<path d="M1300 149 H1310.2 M1305.1 144 V154" stroke="#ff1010" stroke-width="2.1"/>
<path d="M1359.2 149 H1371" stroke="#a80000" stroke-width="3.2"/>
<path d="M1359.8 149 H1370.4" stroke="#ff1010" stroke-width="2.1"/>
<use href="#pcl" x="1417.8" y="142.4"/>
<rect x="1181.6" y="169.9" width="14.8" height="7.4" fill="#fff" stroke="#000" stroke-width="1"/>
<use href="#pcl" x="1394.2" y="167" transform="translate(1394.2 167) scale(.93) translate(-1394.2 -167)"/>
<use href="#eye" x="1423" y="172.6" fill="#000"/>
<path d="M1441.6 173 V170.6 Q1441.6 166.8 1445 166.8 Q1448.4 166.8 1448.4 170.6 V173" fill="none" stroke="#b9b9b9" stroke-width="1.3"/>
<rect x="1440.2" y="172.6" width="9.6" height="7" fill="#b4b4b4"/>
</svg>
<svg style="left:0;top:0;z-index:3" width="1500" height="200" viewBox="0 0 1500 200" font-family="Liberation Sans, sans-serif"><text x="1284.4" y="128.9" font-size="11" fill="#222" textLength="76.2" lengthAdjust="spacing" >Lista de capas</text>
<text x="1203.4" y="177.3" font-size="12.4" fill="#000" textLength="7.2" lengthAdjust="spacing" >0</text></svg>
<div id="rightbar"></div>
<div class="chk" style="z-index:2;left:1456.5px;top:126px;width:50px;height:42.5px"></div>
<div class="chk" style="z-index:2;left:1456.5px;top:423px;width:50px;height:43px"></div>
<div class="abs" style="z-index:2;left:1463px;top:122px;width:26px;height:2px;background:repeating-linear-gradient(90deg,#9c9c9c 0 2px,transparent 2px 6px)"></div>
<div class="abs" style="z-index:2;left:1458px;top:267px;width:42px;height:1px;background:repeating-linear-gradient(90deg,#4a4a4a 0 1px,transparent 1px 3px)"></div>
<div class="abs" style="z-index:2;left:1458px;top:415px;width:42px;height:1px;background:repeating-linear-gradient(90deg,#4a4a4a 0 1px,transparent 1px 3px)"></div>
<svg style="left:0;top:0;z-index:3" width="1500" height="520" viewBox="0 0 1500 520">
<defs>
<g id="win"><rect x="0" y="0" width="27.6" height="27.4" fill="#fff" stroke="#333" stroke-width=".7"/><rect x="0" y="0" width="27.6" height="4.3" fill="#000"/><rect x=".9" y=".8" width="3" height="2.9" fill="#fff"/></g>
</defs>
<use href="#win" x="1463.2" y="133.2"/>
<g transform="translate(1463.2 133.2)">
<path d="M7.4 12.6 L14.6 9 L14.6 18.6 L7.4 21.8 Z" fill="#8c8c8c" stroke="#555" stroke-width=".5"/>
<path d="M9.4 12 L16.6 8.6 L16.6 18.2 L9.4 21.6 Z" fill="#bdbdbd" stroke="#555" stroke-width=".5"/>
<path d="M11.4 11.6 L20 9.6 L20 18 L11.4 21.4 Z" fill="#f4f4f4" stroke="#444" stroke-width=".5"/>
<path d="M13.6 19 L17.6 11.6 L17.8 17" fill="none" stroke="#f05050" stroke-width=".7"/>
</g>
<use href="#win" x="1463.2" y="180.2"/>
<g transform="translate(1463.2 180.2)">
<rect x="7" y="10.4" width="10.4" height="7.4" fill="#fbf0c4" stroke="#555" stroke-width=".6"/>
<circle cx="16.4" cy="17.2" r="4.2" fill="#f4e6b0" fill-opacity=".8" stroke="#555" stroke-width=".6"/>
</g>
<use href="#win" x="1463.2" y="226.2"/>
<rect x="1468.8" y="236.4" width="16.4" height="11" rx="1.6" fill="#f6f6f4" stroke="#c6d0e4" stroke-width=".8"/>
<use href="#win" x="1463.2" y="282"/>
<g transform="translate(1463.2 282)">
<rect x="3.4" y="8.4" width="4" height="3" fill="#000"/><rect x="3.4" y="14.2" width="4" height="3" fill="#000"/><rect x="3.4" y="20.2" width="4" height="3" fill="#000"/>
<rect x="10" y="8.6" width="14" height="2.8" fill="#fff" stroke="#333" stroke-width=".5"/><rect x="10" y="14.4" width="14" height="2.8" fill="#fff" stroke="#333" stroke-width=".5"/><rect x="10" y="20.4" width="14" height="2.8" fill="#fff" stroke="#333" stroke-width=".5"/>
</g>
<use href="#win" x="1463.2" y="328"/>
<g transform="translate(1463.2 328)">
<path d="M6.8 10.4 Q14 8 21.4 10.4 L15.6 16.4 L15.6 22.6 L12.8 21.4 L12.8 16.4 Z" fill="#9a9a9a" stroke="#666" stroke-width=".5"/>
<ellipse cx="14.1" cy="10.4" rx="7.2" ry="1.5" fill="#777"/>
</g>
<use href="#win" x="1463.2" y="374.2"/>
<g transform="translate(1463.2 374.2)">
<path d="M5.8 9.4 L5.8 22.4 L11 18.6 L11 13 Z" fill="#f4f4f4" stroke="#444" stroke-width=".6"/>
<rect x="11" y="12.4" width="10.4" height="7" rx="1.4" fill="#999" stroke="#666" stroke-width=".5"/>
<path d="M4 15.9 H23.6" stroke="#f08080" stroke-width=".7" stroke-dasharray="2 1"/>
</g>
<use href="#win" x="1463.2" y="429.9"/>
<g transform="translate(1463.2 429.9)" stroke="#777" stroke-width=".7">
<path d="M2.6 8.4 H16 M2.6 11.6 H15.4 M2.6 14.8 H17.6 M2.6 18 H19"/>
<path d="M0 22.4 H27.6" stroke="#333"/><path d="M2.4 25 H4.6 M9 25.2 H24.6" stroke="#333" stroke-width=".9"/>
</g>
<use href="#win" x="1463.2" y="476.8"/>
<g transform="translate(1463.2 476.8)">
<rect x="7.8" y="9.8" width="12.2" height="13.2" rx="1" fill="#b87a22" stroke="#8f5a12" stroke-width=".6"/>
<rect x="9.4" y="11.4" width="9" height="10" fill="#f2f2f2"/>
<path d="M10.6 13.8 H17 M10.6 15.8 H17 M10.6 17.8 H15.6" stroke="#c8c8c8" stroke-width=".6"/>
<path d="M18.4 18.6 L18.4 21.4 L15.6 21.4 Z" fill="#999"/>
<rect x="11.2" y="8.4" width="5.4" height="2.6" rx=".6" fill="#a9a99f" stroke="#77776e" stroke-width=".4"/>
</g>
</svg>
<div id="status">
<div class="abs" style="left:253.5px;top:5px;width:1px;height:40px;background:#7a7a7a"></div>
<div class="abs" style="left:254.5px;top:5px;width:1px;height:40px;background:#f2f2f2"></div>
<div class="abs" style="left:506.5px;top:22px;width:6px;height:6px;border-radius:3px;background:#cdcdcd"></div>
<div class="abs" style="left:940.5px;top:22px;width:6px;height:6px;border-radius:3px;background:#cdcdcd"></div>
<div class="abs" style="left:1269.5px;top:22px;width:6px;height:6px;border-radius:3px;background:#cdcdcd"></div>
</div>
<svg style="left:710px;top:800px" width="32" height="42" viewBox="710 800 32 42">
<path d="M717.2 815 Q717.2 806 726 806 Q734.8 806 734.8 815 L734.8 826.6 Q734.8 835.6 726 835.6 Q717.2 835.6 717.2 826.6 Z" fill="#fff" stroke="#444" stroke-width=".7"/>
<path d="M717.2 819.8 Q726 817.4 734.8 819.8" fill="none" stroke="#333" stroke-width="1.1"/>
<path d="M726 806 V808 M726 815.6 V818.6" stroke="#333" stroke-width="1"/>
<rect x="724.4" y="808" width="3.2" height="7.6" rx="1.4" fill="#fff" stroke="#333" stroke-width=".9"/>
</svg>
<svg style="left:0;top:0" width="1500" height="844" viewBox="0 0 1500 844" font-family="Liberation Sans, sans-serif"><text x="1.8" y="815.8" font-size="9.5" fill="#111" textLength="51.6" lengthAdjust="spacing" stroke="#111" stroke-width=".12">101.6,100.6</text>
<text x="1.8" y="836.0" font-size="9.5" fill="#111" textLength="39.7" lengthAdjust="spacing" stroke="#111" stroke-width=".12">@1.6,0.6</text>
<text x="255.9" y="815.8" font-size="9.5" fill="#111" textLength="64.4" lengthAdjust="spacing" stroke="#111" stroke-width=".12">142.9787&lt;45°</text>
<text x="255.9" y="836.0" font-size="9.5" fill="#111" textLength="59.2" lengthAdjust="spacing" stroke="#111" stroke-width=".12">@1.7088&lt;21°</text>
<text x="949.0" y="825.4" font-size="9.2" fill="#111" textLength="149.6" lengthAdjust="spacing" stroke="#111" stroke-width=".12">No hay entidades seleccionadas.</text></svg>
<!-- click highlight + pointer -->
<div class="abs" style="left:301.7px;top:53.9px;width:79.6px;height:79.6px;border-radius:40px;background:radial-gradient(circle closest-side,rgba(244,247,252,.38) 0,rgba(242,246,252,.42) 80%,rgba(150,178,210,.55) 85.5%,rgba(185,202,224,.45) 88.5%,rgba(148,176,208,.58) 91.5%,rgba(180,198,222,.45) 94.5%,rgba(148,176,208,.58) 97.5%,rgba(148,176,208,0) 99.5%)"></div>
<svg style="left:330px;top:85px" width="40" height="45" viewBox="330 85 40 45">
<path d="M342.4 94 L342.4 115.6 L347.8 110.4 L352.7 120.5 L355.8 119.1 L351.6 109.2 L357 108.7 Z" fill="#fff" stroke="#fff" stroke-width="3" stroke-linejoin="round" stroke-opacity=".9"/>
<path d="M342.4 94 L342.4 115.6 L347.8 110.4 L352.7 120.5 L355.8 119.1 L351.6 109.2 L357 108.7 Z" fill="#fff" stroke="#000" stroke-width="1.25" stroke-linejoin="miter"/>
</svg>
</body>
</html>
